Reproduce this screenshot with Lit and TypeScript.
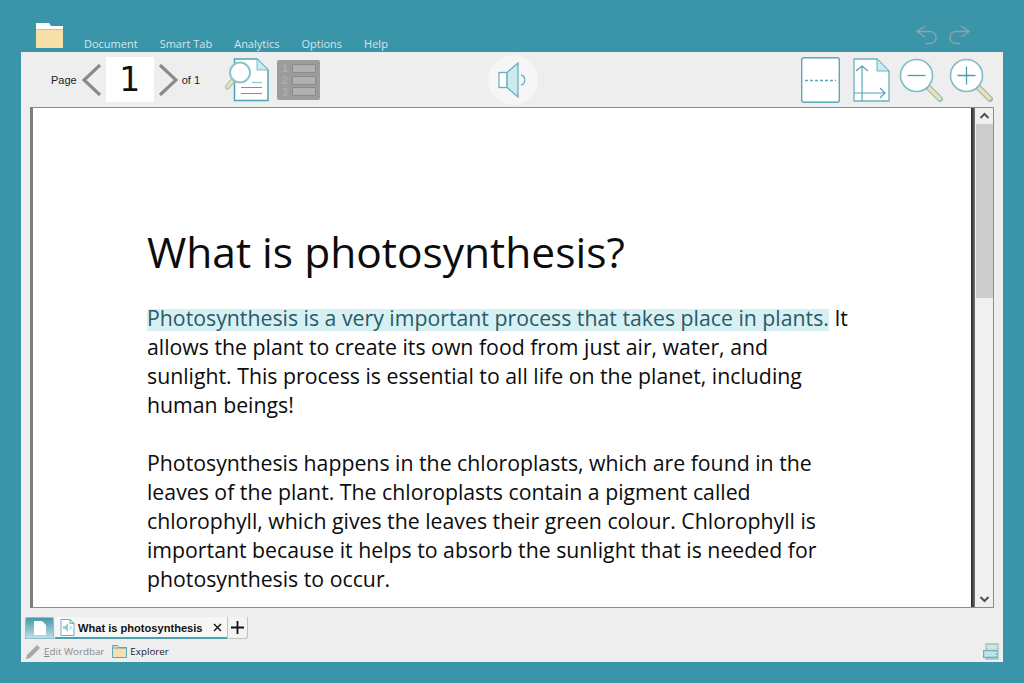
import { LitElement, html, css, svg } from 'lit';
import { customElement } from 'lit/decorators.js';

const TEAL = '#4a9fb0';
const PALE = '#cdeaee';
const TAN = '#f5dfa9';

const folderIcon = html`<svg class="folder" width="27" height="25" viewBox="0 0 27 25">
  <path d="M0 0h13l2 3h12v3H0z" fill="#fff" />
  <rect y="6" width="27" height="19" fill="#f6dfa8" />
  <rect y="6" width="27" height="1" fill="#a9c7c4" />
</svg>`;

const chevron = (right: boolean) => html`<svg width="20" height="32" viewBox="0 0 20 32">
  <path d=${right ? 'M2 1l16 15L2 31' : 'M18 1L2 16l16 15'} fill="none" stroke="#8a8a8a" stroke-width="3.2" />
</svg>`;

const magnifier = (mark: unknown) => html`<svg width="44" height="44" viewBox="0 0 44 44">
  <path d="M30 30l11 11" stroke="#8fbdc4" stroke-width="6" stroke-linecap="round" />
  <path d="M30.500 30.500l10 10" stroke=${TAN} stroke-width="3.600" stroke-linecap="round" />
  <circle cx="17.500" cy="17.500" r="16" fill="#fff" stroke="#7fbcc8" stroke-width="1.600" />
  ${mark}
</svg>`;

const zoomOut = svg`<path d="M8.500 17.500h18" stroke="${TEAL}" stroke-width="1.300" />`;
const zoomIn = svg`<path d="M8.500 17.500h18M17.500 8.500v18" stroke="${TEAL}" stroke-width="1.300" />`;

@customElement('app-root')
export class AppRoot extends LitElement {
  static styles = css`
    :host {
      display: block;
      width: 1024px;
      height: 683px;
      background: #3b95a8;
      overflow: hidden;
      font-family: 'Open Sans', sans-serif;
    }
    .top {
      height: 52px;
      display: flex;
      align-items: flex-end;
      padding-left: 36px;
      box-sizing: border-box;
    }
    .folder {
      display: block;
      margin-bottom: 4px;
    }
    .menu {
      display: flex;
      margin-left: 21px;
      margin-bottom: 1px;
      color: #d4e6ea;
      font-size: 11px;
      line-height: 15px;
      gap: 22px;
    }
    .history {
      margin-left: auto;
      margin-right: 54px;
      margin-bottom: 6px;
      display: flex;
      gap: 10px;
    }
    .window {
      margin: 0 21px;
      height: 610px;
      background: #eeeeee;
      display: flex;
      flex-direction: column;
    }
    .toolbar {
      height: 55px;
      display: flex;
      align-items: center;
      padding-left: 30px;
      flex: none;
    }
    .page-label {
      font-family: 'Liberation Sans', sans-serif;
      font-size: 11px;
      color: #222;
    }
    .toolbar svg {
      display: block;
      flex: none;
    }
    .prev {
      margin-left: 5px;
    }
    .page-box {
      width: 48px;
      height: 45px;
      background: #fff;
      margin: 0 4px;
      text-align: center;
      font-family: 'DejaVu Sans', sans-serif;
      font-size: 33px;
      line-height: 45px;
      color: #111;
    }
    .of {
      margin-left: 4px;
    }
    .find {
      margin-left: 25px;
    }
    .list {
      margin-left: 7px;
    }
    .speaker {
      width: 50px;
      height: 50px;
      border-radius: 50%;
      background: #f6f6f6;
      margin-left: 168px;
      display: flex;
      align-items: center;
      justify-content: center;
      flex: none;
    }
    .right {
      margin-left: auto;
      margin-right: 10px;
      display: flex;
      align-items: center;
      gap: 6px;
    }
    .page-break {
      margin-right: 7px;
    }
    .orient {
      margin-right: 3px;
    }
    .doc {
      margin: 0 9px;
      height: 501px;
      flex: none;
      display: flex;
      box-sizing: border-box;
      border: 1px solid #8c8c8c;
      border-left-width: 3px;
      border-left-color: #7d7d7d;
      overflow: hidden;
    }
    .sheet {
      flex: 1;
      background: #fff;
      padding: 114px 0 0 114px;
      box-sizing: border-box;
      color: #0c0c0c;
    }
    .edge {
      width: 4px;
      flex: none;
      background: linear-gradient(to right, #222, #777);
    }
    h1 {
      margin: 0 0 21px;
      font-weight: 400;
      font-size: 42.5px;
      line-height: 60px;
    }
    p {
      margin: 0 0 29px;
      width: 708px;
      font-size: 21.27px;
      line-height: 29px;
    }
    mark {
      background: linear-gradient(transparent 6px, #d6f0f4 6px, #d6f0f4 28px, transparent 28px);
      color: #2b5a66;
    }
    .scroll {
      width: 17px;
      flex: none;
      margin-left: 1px;
      background: #f0f0f0;
      display: flex;
      flex-direction: column;
    }
    .scroll svg {
      display: block;
    }
    .thumb {
      height: 174px;
      background: #cdcdcd;
    }
    .fill {
      flex: 1;
    }
    .tabs {
      margin: 9px 0 0 4px;
      height: 22px;
      display: flex;
      align-items: stretch;
      flex: none;
    }
    .home {
      width: 29px;
      border-radius: 3px 3px 0 0;
      box-shadow: inset 0 0 0 1px #8fc0cb;
      background: linear-gradient(#3f93a6, #c6e4e8);
      display: flex;
      align-items: center;
      justify-content: center;
    }
    .tab {
      width: 172px;
      margin-left: 1px;
      background: #f6f6f6;
      border-bottom: 2px solid #4a9fb0;
      border-radius: 3px 3px 0 0;
      display: flex;
      align-items: center;
      box-sizing: border-box;
      padding: 1px 0 0 5px;
      font-family: 'Liberation Sans', sans-serif;
      font-weight: 700;
      font-size: 11.100px;
      color: #111;
    }
    .tab-title {
      margin-left: 3px;
    }
    .close {
      margin-left: 10px;
      display: block;
    }
    .add {
      width: 21px;
      background: #f3f3f3;
      border: 1px solid #c2c2c2;
      border-top: none;
      border-radius: 0 0 3px 0;
      display: flex;
      align-items: center;
      justify-content: center;
      box-sizing: border-box;
    }
    .status {
      display: flex;
      align-items: center;
      height: 21px;
      padding: 2px 4px 0;
      font-size: 9.800px;
      color: #222;
    }
    .status svg {
      display: block;
      flex: none;
    }
    .edit {
      color: #8a8a8a;
      margin-left: 3px;
    }
    .edit u {
      text-decoration-thickness: 1px;
    }
    .explorer-icon {
      margin-left: 8px;
      margin-right: 3px;
    }
    .doc-icon {
      margin-left: auto;
    }
  `;

  render() {
    return html`
      <div class="top">
        ${folderIcon}
        <nav class="menu">
          <span>Document</span><span>Smart Tab</span><span>Analytics</span><span>Options</span><span>Help</span>
        </nav>
        <div class="history">
          <svg width="22" height="21" viewBox="0 0 22 21" fill="none" stroke="#8fa3aa" stroke-width="1.500">
            <path d="M9 1L1 6.500 9 12" /><path d="M1 6.500h13c8 0 8 12 0 12h-4" />
          </svg>
          <svg width="22" height="21" viewBox="0 0 22 21" fill="none" stroke="#8fa3aa" stroke-width="1.500">
            <path d="M13 1l8 5.500L13 12" /><path d="M21 6.500H8c-8 0-8 12 0 12h4" />
          </svg>
        </div>
      </div>
      <div class="window">
        <div class="toolbar">
          <span class="page-label">Page</span>
          <span class="prev">${chevron(false)}</span>
          <div class="page-box">1</div>
          ${chevron(true)}
          <span class="page-label of">of 1</span>
          <svg class="find" width="45" height="44" viewBox="0 0 45 44">
            <path d="M9.500 1h22.500l11 11v30.500H9.500z" fill="#fff" stroke="#4fa3b4" stroke-width="1.500" />
            <path d="M32 1v11h11z" fill=${PALE} stroke="#7fbcc8" stroke-width="1" />
            <path d="M27 24.500h10" stroke="#8fc4ce" stroke-width="1.200" />
            <path d="M16 29.500h21M16 35.500h21" stroke="#4fa3b4" stroke-width="1.200" />
            <path d="M8 22l-5.500 7" stroke="#8fbdc4" stroke-width="5" stroke-linecap="round" />
            <path d="M8 22l-5.500 7" stroke=${TAN} stroke-width="3" stroke-linecap="round" />
            <circle cx="15" cy="14.500" r="10" fill="#fff" stroke="#8cc4ce" stroke-width="2" />
          </svg>
          <svg class="list" width="43" height="40" viewBox="0 0 43 40">
            <rect width="43" height="40" rx="2" fill="#9c9c9c" />
            <g fill="#b0b0b0" stroke="#8b8b8b" stroke-width="1">
              <rect x="15.500" y="4.500" width="23" height="8" />
              <rect x="15.500" y="16.500" width="23" height="8" />
              <rect x="15.500" y="27.500" width="23" height="8" />
            </g>
            <g fill="#adadad" font-family="Liberation Sans, sans-serif" font-size="10.400" font-weight="700">
              <text x="5" y="12">1</text><text x="5" y="24">2</text><text x="5" y="36">3</text>
            </g>
          </svg>
          <div class="speaker">
            <svg width="30" height="36" viewBox="0 0 30 36">
              <rect x="1" y="10.500" width="8" height="15" fill="#fff" stroke="#68b2c0" stroke-width="1.300" />
              <path d="M9 10.500L20 1v34L9 25.500z" fill=${PALE} stroke="#68b2c0" stroke-width="1.300" />
              <path d="M23 13c5 1 5 9 0 10" fill="none" stroke="#68b2c0" stroke-width="1.300" />
            </svg>
          </div>
          <div class="right">
            <svg class="page-break" width="39" height="46" viewBox="0 0 39 46">
              <rect x="0.700" y="0.700" width="37.600" height="44.600" rx="2" fill="#fff" stroke="#5aa8b8" stroke-width="1.400" />
              <path d="M4 23.500h31" stroke="#5aa8b8" stroke-width="1.300" stroke-dasharray="3 2" />
            </svg>
            <svg class="orient" width="37" height="44" viewBox="0 0 37 44">
              <path d="M1 1h23l12 12v30H1z" fill="#fff" stroke="#6cb3c0" stroke-width="1.300" />
              <path d="M24 1v12h12z" fill=${PALE} stroke="#6cb3c0" stroke-width="1" />
              <path d="M9 43V8M3 13l6-5 6 5M1 35h31M27 30l5 5-5 5" fill="none" stroke="#4fa3b4" stroke-width="1.100" />
            </svg>
            ${magnifier(zoomOut)} ${magnifier(zoomIn)}
          </div>
        </div>
        <div class="doc">
          <div class="sheet">
            <h1>What is photosynthesis?</h1>
            <p>
              <mark>Photosynthesis is a very important process that takes place in plants.</mark> It allows the plant
              to create its own food from just air, water, and sunlight. This process is essential to all life on the
              planet, including human beings!
            </p>
            <p>
              Photosynthesis happens in the chloroplasts, which are found in the leaves of the plant. The chloroplasts
              contain a pigment called chlorophyll, which gives the leaves their green colour. Chlorophyll is important
              because it helps to absorb the sunlight that is needed for photosynthesis to occur.
            </p>
          </div>
          <div class="edge"></div>
          <div class="scroll">
            <svg width="17" height="16" viewBox="0 0 17 16">
              <path d="M4.500 10l4-4 4 4" fill="none" stroke="#505050" stroke-width="2" />
            </svg>
            <div class="thumb"></div>
            <div class="fill"></div>
            <svg width="17" height="16" viewBox="0 0 17 16">
              <path d="M4.500 6l4 4 4-4" fill="none" stroke="#505050" stroke-width="2" />
            </svg>
          </div>
        </div>
        <div class="tabs">
          <div class="home">
            <svg width="12" height="14" viewBox="0 0 12 14"><path d="M0 0h8l4 4v10H0z" fill="#fff" /></svg>
          </div>
          <div class="tab">
            <svg width="15" height="17" viewBox="0 0 15 17">
              <path d="M1 .500h9l4 4v12H1z" fill="#fff" stroke="#6cb3c0" />
              <path d="M10 .500v4h4z" fill=${PALE} stroke="#6cb3c0" />
              <path d="M3 7h2l3-3v9L5 10H3z" fill="#9accd5" />
              <path d="M9.500 6.500c2 1 2 3 0 4" fill="none" stroke="#7dbdc9" />
            </svg>
            <span class="tab-title">What is photosynthesis</span>
            <svg class="close" width="9" height="9" viewBox="0 0 9 9">
              <path d="M1 1l7 7M8 1L1 8" stroke="#111" stroke-width="1.400" />
            </svg>
          </div>
          <div class="add">
            <svg width="13" height="13" viewBox="0 0 13 13"><path d="M6.500 0v13M0 6.500h13" stroke="#111" stroke-width="1.800" /></svg>
          </div>
        </div>
        <div class="status">
          <svg width="16" height="16" viewBox="0 0 16 16">
            <path d="M2 11L12 1l3 3L5 14l-4 1z" fill="#a8a8a8" />
          </svg>
          <span class="edit"><u>E</u>dit Wordbar</span>
          <svg class="explorer-icon" width="15" height="13" viewBox="0 0 15 13">
            <path d="M.500 12.500V.500h5l1.500 2h7.500v10z" fill="#f6dfa8" stroke="#5aa8b8" />
            <path d="M.500 3h14" stroke="#5aa8b8" />
          </svg>
          <span>Explorer</span>
          <svg class="doc-icon" width="16" height="17" viewBox="0 0 16 17">
            <rect x="3" y="1" width="12" height="15" fill="#bfe0e6" stroke="#6cb3c0" />
            <rect x="3.500" y="2" width="11" height="3" fill=${TAN} />
            <rect x="0.500" y="7.500" width="13" height="7" fill="#a9d6de" stroke="#6cb3c0" />
            <text x="2" y="13" font-family="Liberation Sans, sans-serif" font-size="5.500" fill="#eef8fa">DOC</text>
          </svg>
        </div>
      </div>
    `;
  }
}
